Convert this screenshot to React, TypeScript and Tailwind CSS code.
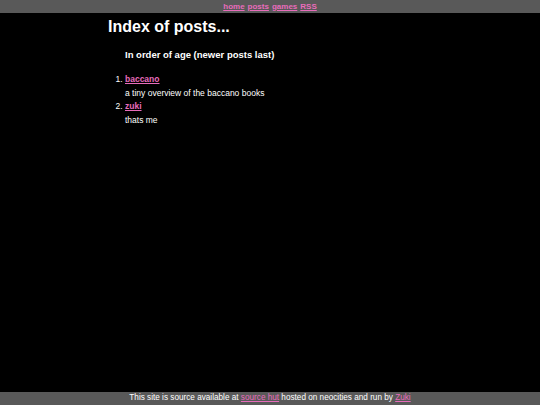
export default function App() {
  const posts = [
    { title: "baccano", desc: "a tiny overview of the baccano books" },
    { title: "zuki", desc: "thats me" },
  ];
  const link = "font-bold text-[#e86cbc] underline";

  return (
    <div className="flex h-[405px] w-[540px] flex-col bg-black font-['Liberation_Sans',Arial,sans-serif] text-white">
      {/* nav */}
      <div className="flex h-[13px] shrink-0 items-center justify-center gap-[3px] bg-[#595959] text-[8px] leading-none">
        <a className={link} href="#">home</a>
        <a className={link} href="#">posts</a>
        <a className={link} href="#">games</a>
        <a className={link} href="#">RSS</a>
      </div>

      <main className="flex-1 pl-[108px]">
        <h1 className="mt-[4px] text-[16px] font-bold leading-[20px]">Index of posts...</h1>
        <div className="pl-[17px]">
          <h2 className="mt-[12px] text-[9.5px] font-bold leading-[12px]">
            In order of age (newer posts last)
          </h2>
          <ol className="mt-[12px] list-decimal text-[8.5px] leading-[13.7px]">
            {posts.map((p) => (
              <li key={p.title}>
                <a className={link} href="#">{p.title}</a>
                <p>{p.desc}</p>
              </li>
            ))}
          </ol>
        </div>
      </main>

      {/* footer */}
      <div className="flex h-[13px] shrink-0 items-center justify-center bg-[#595959] text-[8.2px] leading-none">
        <span>
          This site is source available at{" "}
          <a className="text-[#e86cbc] underline" href="#">source hut</a> hosted on neocities and
          run by <a className="text-[#e86cbc] underline" href="#">Zuki</a>
        </span>
      </div>
    </div>
  );
}
